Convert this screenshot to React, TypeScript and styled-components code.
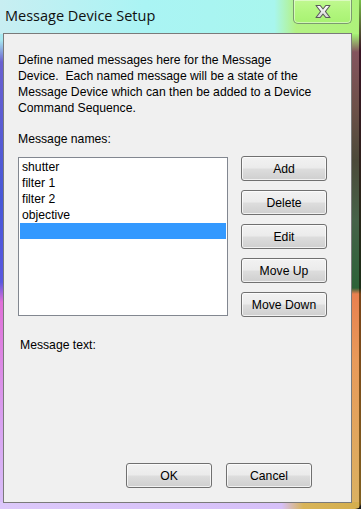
import React, { useState } from 'react';
import styled, { createGlobalStyle } from 'styled-components';

const GlobalStyle = createGlobalStyle`
  html, body {
    margin: 0;
    padding: 0;
    background: #1a1a1a;
  }
  * {
    box-sizing: border-box;
  }
`;

const Window = styled.div`
  width: 361px;
  height: 509px;
  display: flex;
  flex-direction: column;
  border-bottom-right-radius: 6px;
  overflow: hidden;
  font-family: "Liberation Sans", Arial, sans-serif;
  background:
    linear-gradient(180deg, #78c048 0, #3a1424 50px, #2a2418 200px, #1c3018 288px, #7a4418 294px, #806020 100%) right / 2px 100% no-repeat,
    linear-gradient(90deg, #c8eef2 0%, #aaf4f4 40%, #a8f6ee 76%, #b4f284 82%, #aef27a 100%) top / 100% 34px no-repeat,
    linear-gradient(90deg, #dcc8fa 0%, #d6c0f8 78%, #d8b458 84%, #d4ae4e 100%) bottom / 100% 7px no-repeat,
    linear-gradient(180deg, #a4f274 0, #a4f274 34px, #84545e 52px, #6c5048 110px, #4c4a3a 160px, #466248 220px, #2c6238 288px, #e88050 294px, #e89a5a 360px, #dab262 100%) right / 9px 100% no-repeat,
    linear-gradient(180deg, #b0ecf2 0, #a8e8f0 40px, #6a60d0 62px, #4858d8 200px, #5a58e0 282px, #e070d8 302px, #d8a0f0 420px, #d8c0f8 100%);
`;

const TitleBar = styled.div`
  height: 33px;
  display: flex;
  justify-content: space-between;
  align-items: flex-start;
  flex-shrink: 0;
`;

const Title = styled.div`
  padding: 7px 0 0 5px;
  font-family: "Open Sans", "Liberation Sans", sans-serif;
  font-size: 14.5px;
  color: #101010;
  line-height: 18px;
`;

const CloseButton = styled.button`
  width: 59px;
  height: 24px;
  margin-right: 9px;
  padding: 0;
  border: 1px solid #7c9a70;
  border-top: none;
  border-radius: 0 0 5px 5px;
  background: linear-gradient(180deg, #c0f890 0%, #b2f67e 50%, #a8f272 100%);
  box-shadow: inset 0 0 0 1px rgba(255, 255, 255, 0.45);
  display: flex;
  align-items: center;
  justify-content: center;
  cursor: pointer;
`;

const Client = styled.div`
  height: 470px;
  margin: 0 9px 0 3px;
  border: 1px solid #7a7a7a;
  background: #f0f0f0;
  display: flex;
  flex-direction: column;
  padding: 18px 24px 14px 14px;
  font-size: 12.2px;
  color: #000;
`;

const Intro = styled.p`
  margin: 0;
  line-height: 16px;
`;

const Label = styled.div<{ $indent?: number }>`
  line-height: 16px;
  margin-left: ${(p) => p.$indent ?? 0}px;
`;

const NamesRow = styled.div`
  display: flex;
  gap: 13px;
  margin-top: 10px;
`;

const ListBox = styled.ul`
  width: 210px;
  height: 159px;
  flex-shrink: 0;
  margin: 0;
  padding: 1px;
  list-style: none;
  background: #fff;
  border: 1px solid #828790;
  overflow: hidden;
`;

const ListItem = styled.li<{ $selected?: boolean }>`
  height: 16px;
  line-height: 16px;
  padding-left: 2px;
  white-space: nowrap;
  background: ${(p) => (p.$selected ? '#3399ff' : 'transparent')};
  color: ${(p) => (p.$selected ? '#fff' : '#000')};
  cursor: default;
`;

const ButtonColumn = styled.div`
  display: flex;
  flex-direction: column;
  gap: 9px;
  margin-top: -1px;
`;

const Button = styled.button`
  width: 86px;
  height: 25px;
  flex-shrink: 0;
  padding: 0;
  border: 1px solid #707070;
  border-radius: 3px;
  background: linear-gradient(180deg, #f2f2f2 0%, #ebebeb 48%, #dddddd 52%, #cfcfcf 100%);
  box-shadow: inset 0 0 0 1px rgba(255, 255, 255, 0.7);
  font-family: "Liberation Sans", Arial, sans-serif;
  font-size: 12.2px;
  color: #000;
  cursor: pointer;
`;

const Spacer = styled.div`
  flex: 1;
`;

const Footer = styled.div`
  display: flex;
  justify-content: flex-end;
  gap: 14px;
  margin-right: 15px;
`;

const CloseGlyph = () => (
  <svg width="18" height="15" viewBox="0 0 18 15">
    <defs>
      <linearGradient id="xg" x1="0" y1="0" x2="0" y2="1">
        <stop offset="0" stopColor="#ffffff" />
        <stop offset="1" stopColor="#d4d4d4" />
      </linearGradient>
    </defs>
    <path
      d="M2 1.5h4.2L9 5l2.8-3.5H16l-4.6 6 4.6 6h-4.2L9 10l-2.8 3.5H2l4.6-6z"
      fill="url(#xg)"
      stroke="#5a5a5a"
      strokeWidth="1.1"
      strokeLinejoin="round"
    />
  </svg>
);

const names = ['shutter', 'filter 1', 'filter 2', 'objective', ''];

const App: React.FC = () => {
  const [selected, setSelected] = useState<number>(4);

  return (
    <>
      <GlobalStyle />
      <Window>
        <TitleBar>
          <Title>Message Device Setup</Title>
          <CloseButton aria-label="Close">
            <CloseGlyph />
          </CloseButton>
        </TitleBar>
        <Client>
          <Intro>
            Define named messages here for the Message
            <br />
            Device.&nbsp; Each named message will be a state of the
            <br />
            Message Device which can then be added to a Device
            <br />
            Command Sequence.
          </Intro>
          <Label style={{ marginTop: 15 }}>Message names:</Label>
          <NamesRow>
            <ListBox>
              {names.map((name, i) => (
                <ListItem key={i} $selected={i === selected} onClick={() => setSelected(i)}>
                  {name}
                </ListItem>
              ))}
            </ListBox>
            <ButtonColumn>
              <Button>Add</Button>
              <Button>Delete</Button>
              <Button>Edit</Button>
              <Button>Move Up</Button>
              <Button>Move Down</Button>
            </ButtonColumn>
          </NamesRow>
          <Label $indent={2} style={{ marginTop: 20 }}>
            Message text:
          </Label>
          <Spacer />
          <Footer>
            <Button>OK</Button>
            <Button>Cancel</Button>
          </Footer>
        </Client>
      </Window>
    </>
  );
};

export default App;
